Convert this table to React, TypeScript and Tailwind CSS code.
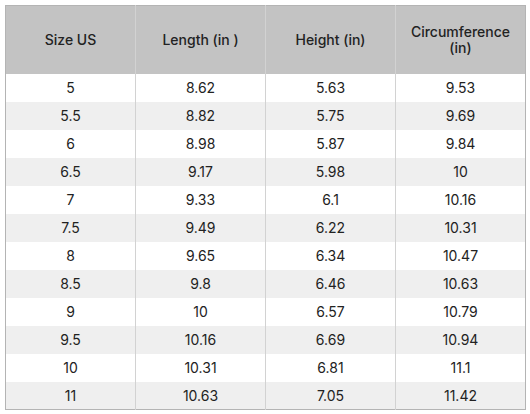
import React from 'react';

const rows: string[][] = [
  ['5', '8.62', '5.63', '9.53'],
  ['5.5', '8.82', '5.75', '9.69'],
  ['6', '8.98', '5.87', '9.84'],
  ['6.5', '9.17', '5.98', '10'],
  ['7', '9.33', '6.1', '10.16'],
  ['7.5', '9.49', '6.22', '10.31'],
  ['8', '9.65', '6.34', '10.47'],
  ['8.5', '9.8', '6.46', '10.63'],
  ['9', '10', '6.57', '10.79'],
  ['9.5', '10.16', '6.69', '10.94'],
  ['10', '10.31', '6.81', '11.1'],
  ['11', '10.63', '7.05', '11.42'],
];

const headers = ['Size US', 'Length (in )', 'Height (in)', 'Circumference (in)'];

export default function App() {
  return (
    <div className="bg-white w-[530px] h-[414px] pl-[5px] pt-[5px] font-['Inter','Liberation_Sans',sans-serif] text-[#222]">
      <table className="w-[521px] table-fixed border-collapse border border-[#b4b4b4] text-[14px]">
        <thead>
          <tr className="bg-[#c3c3c3] h-[68px]">
            {headers.map((h, i) => (
              <th
                key={h}
                className={`font-medium leading-[16px] px-3 text-center ${i < 3 ? 'border-r border-[#d2d2d2]' : ''}`}
              >
                {h}
              </th>
            ))}
          </tr>
        </thead>
        <tbody>
          {rows.map((r, ri) => (
            <tr key={ri} className={`h-[28px] ${ri % 2 === 1 ? 'bg-[#efefef]' : 'bg-white'}`}>
              {r.map((c, ci) => (
                <td
                  key={ci}
                  className={`text-center p-0 ${ci < 3 ? 'border-r border-[#d2d2d2]' : ''}`}
                >
                  {c}
                </td>
              ))}
            </tr>
          ))}
        </tbody>
      </table>
    </div>
  );
}
